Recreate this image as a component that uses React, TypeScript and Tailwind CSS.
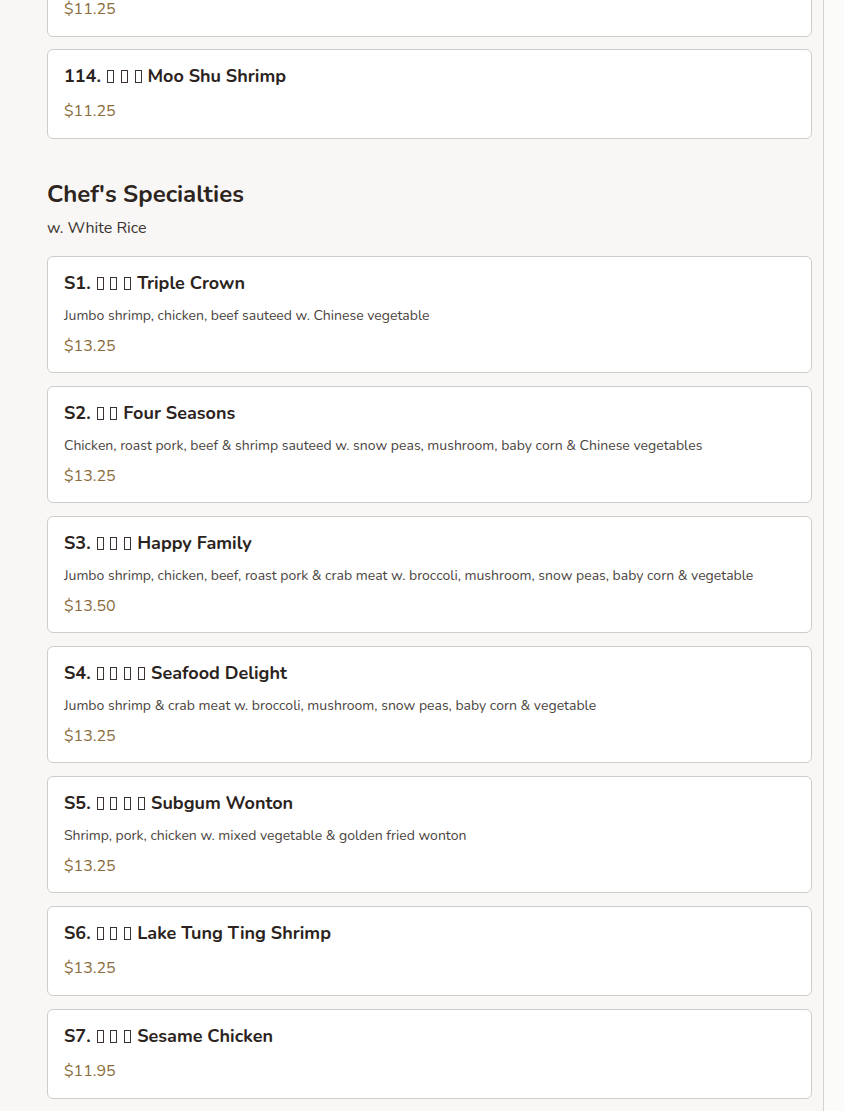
import type { ReactNode } from "react";

type Item = {
  code: string;
  zh: number;
  name: string;
  desc?: string;
  price: string;
};

const specialties: Item[] = [
  { code: "S1.", zh: 3, name: "Triple Crown", desc: "Jumbo shrimp, chicken, beef sauteed w. Chinese vegetable", price: "$13.25" },
  { code: "S2.", zh: 2, name: "Four Seasons", desc: "Chicken, roast pork, beef & shrimp sauteed w. snow peas, mushroom, baby corn & Chinese vegetables", price: "$13.25" },
  { code: "S3.", zh: 3, name: "Happy Family", desc: "Jumbo shrimp, chicken, beef, roast pork & crab meat w. broccoli, mushroom, snow peas, baby corn & vegetable", price: "$13.50" },
  { code: "S4.", zh: 4, name: "Seafood Delight", desc: "Jumbo shrimp & crab meat w. broccoli, mushroom, snow peas, baby corn & vegetable", price: "$13.25" },
  { code: "S5.", zh: 4, name: "Subgum Wonton", desc: "Shrimp, pork, chicken w. mixed vegetable & golden fried wonton", price: "$13.25" },
  { code: "S6.", zh: 3, name: "Lake Tung Ting Shrimp", price: "$13.25" },
  { code: "S7.", zh: 3, name: "Sesame Chicken", price: "$11.95" },
];

// missing-glyph boxes, as the fallback font drew them
function Tofu() {
  return <span className="inline-block w-[7px] h-[13px] border border-[#3a3330] mx-[1px] align-[-1px]" />;
}

function MenuCard({ item, className = "" }: { item: Item; className?: string }) {
  const boxes: ReactNode[] = [];
  for (let i = 0; i < item.zh; i++) {
    boxes.push(<Tofu key={i} />, " ");
  }
  return (
    <div className={"bg-white border border-[#cfcdca] rounded-md px-4 pt-[15px] " + (item.desc ? "pb-[14px] " : "pb-[15px] ") + className}>
      <h3 className="text-[18px] leading-[22px] font-bold text-[#2b2320]">
        {item.code} {boxes}
        {item.name}
      </h3>
      {item.desc && <p className="mt-[12px] text-[14px] leading-[20px] text-[#4a4440]">{item.desc}</p>}
      <div className={(item.desc ? "mt-2" : "mt-3") + " text-[16px] leading-[24px] text-[#8a6c3c]"}>{item.price}</div>
    </div>
  );
}

export default function App() {
  return (
    <div className="min-h-[1111px] bg-[#fbfbfa] overflow-hidden" style={{ fontFamily: "Nunito, Lato, 'Noto Sans', sans-serif" }}>
      <div className="w-[824px] min-h-[1111px] bg-[#f8f7f5] border-r border-[#d6d4d1] pl-[47px] pr-[11px]">
        <div className="flex flex-col gap-3">
          <MenuCard className="-mt-[53px]" item={{ code: "113.", zh: 3, name: "Moo Shu Pork", price: "$11.25" }} />
          <MenuCard item={{ code: "114.", zh: 3, name: "Moo Shu Shrimp", price: "$11.25" }} />
        </div>

        <h2 className="mt-[39px] text-[24px] leading-[32px] font-bold text-[#2d2420]">Chef's Specialties</h2>
        <p className="mt-[7px] text-[16px] leading-[22px] text-[#3b3330]">w. White Rice</p>

        <div className="mt-[17px] flex flex-col gap-[13px] pb-6">
          {specialties.map((it) => (
            <MenuCard key={it.code} item={it} />
          ))}
        </div>
      </div>
    </div>
  );
}
